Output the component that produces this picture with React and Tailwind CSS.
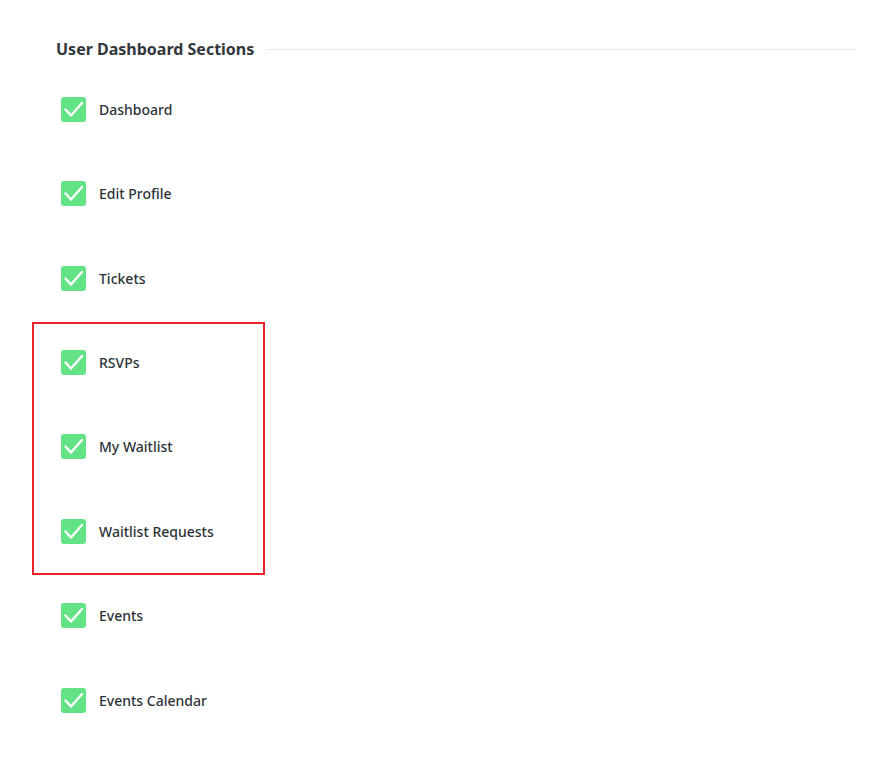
const sections = [
  'Dashboard',
  'Edit Profile',
  'Tickets',
  'RSVPs',
  'My Waitlist',
  'Waitlist Requests',
  'Events',
  'Events Calendar',
];

function CheckBox() {
  return (
    <span className="flex h-[25px] w-[25px] shrink-0 items-center justify-center rounded-[3px] bg-[#63e386]">
      <svg width="25" height="25" viewBox="0 0 25 25" fill="none">
        <path d="M4.5 12.5 L10 18.5 L21 6" stroke="#fff" strokeWidth="2.4" strokeLinecap="round" strokeLinejoin="round" />
      </svg>
    </span>
  );
}

export default function App() {
  return (
    <div className="relative min-h-[760px] w-[876px] bg-white pl-[56px] pr-[20px] pt-[38px]" style={{ fontFamily: '"Noto Sans", "Open Sans", sans-serif' }}>
      {/* Section heading with rule */}
      <div className="flex h-[22px] items-center gap-3">
        <h2 className="text-[16px] font-bold text-[#32373c]">User Dashboard Sections</h2>
        <div className="h-px flex-1 bg-[#ebebeb]" />
      </div>

      {/* Checklist */}
      <ul className="mt-[7px]">
        {sections.map((label) => (
          <li key={label} className="flex h-[84.43px] items-center gap-[13px] pl-[5px]">
            <CheckBox />
            <span className="text-[14px] font-medium text-[#2c3338]">{label}</span>
          </li>
        ))}
      </ul>

      {/* Annotation box around RSVPs / waitlist items */}
      <div className="pointer-events-none absolute left-[32px] top-[322px] h-[253px] w-[233px] border-2 border-[#e8232a]" />
    </div>
  );
}
